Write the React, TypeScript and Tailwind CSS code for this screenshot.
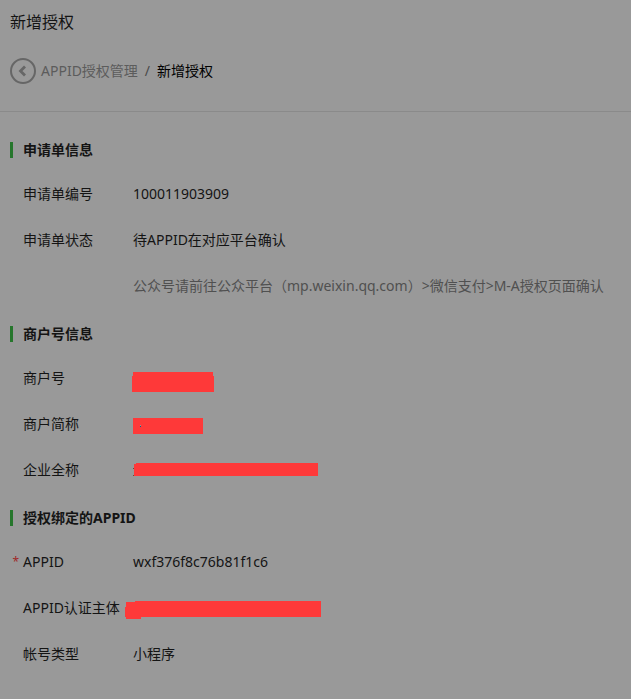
import type { ReactNode } from 'react';

function Redacted({ d, children }: { d: string; children?: ReactNode }) {
  return (
    <svg className="absolute top-0 left-0 overflow-visible" width="190" height="20" shapeRendering="crispEdges" aria-hidden="true">
      <path d={d} fill="#fe3939" />
      {children}
    </svg>
  );
}

function Section({ title, children }: { title: string; children: ReactNode }) {
  return (
    <section>
      <h2 className="flex items-center gap-[10px] text-sm leading-5 font-bold">
        <span className="w-[3px] h-4 bg-[#26762c]" />
        {title}
      </h2>
      <dl className="mt-6 pl-[13px] space-y-[26px]">{children}</dl>
    </section>
  );
}

function Field({ label, required, children }: { label: string; required?: boolean; children: ReactNode }) {
  return (
    <div className="flex text-sm leading-5">
      <dt className="relative w-[110px] shrink-0">
        {required && <span className="absolute right-full mr-1 text-xs leading-5 text-[#a02828]">*</span>}
        {label}
      </dt>
      <dd className="relative min-w-0 flex-1">{children}</dd>
    </div>
  );
}

export default function App() {
  return (
    <div className="min-h-screen bg-[#999999] text-[#141414] font-['Noto_Sans','Noto_Sans_CJK_SC',sans-serif]">
      <header className="px-[10px] pt-3 pb-[27px] border-b border-[#8a8a8a]">
        <h1 className="text-base leading-5">新增授权</h1>
        <nav className="mt-[26px] flex items-center text-sm leading-5">
          <a href="#" className="flex items-center gap-[5px] text-[#5c5c5c]">
            <svg width="26" height="26" viewBox="0 0 26 26" fill="none" stroke="#666666" aria-hidden="true">
              <circle cx="13" cy="13" r="12" strokeWidth="2" />
              <path d="M15 8.5 10.5 13l4.5 4.5" strokeWidth="2.8" />
            </svg>
            APPID授权管理
          </a>
          <span className="mx-[7px] text-[#4a4a4a]">/</span>
          <span className="text-black">新增授权</span>
        </nav>
      </header>

      <main className="px-[10px] pt-7 pb-9 space-y-7">
        <Section title="申请单信息">
          <Field label="申请单编号">100011903909</Field>
          <Field label="申请单状态">
            待APPID在对应平台确认
            <p className="mt-[26px] text-[#505050]">公众号请前往公众平台（mp.weixin.qq.com）&gt;微信支付&gt;M-A授权页面确认</p>
          </Field>
        </Section>

        <Section title="商户号信息">
          <Field label="商户号">
            <Redacted d="M0 4H80V8H81V24H-1V8H0Z" />
          </Field>
          <Field label="商户简称">
            <Redacted d="M0 4H70V20H0Z">
              <path d="M7 11h1v1h-1z" fill="#a09090" />
              <path d="M7 12h1v1h-1z" fill="#174f80" />
            </Redacted>
          </Field>
          <Field label="企业全称">
            <Redacted d="M3 3H185V16H1V4H3Z">
              <path d="M0 8h1v1h-1zM0 15h1v1h-1z" fill="#6b4a35" />
            </Redacted>
          </Field>
        </Section>

        <Section title="授权绑定的APPID">
          <Field label="APPID" required>wxf376f8c76b81f1c6</Field>
          <Field label="APPID认证主体">
            <Redacted d="M2 3H188V19H8V21H-7V19H-8V9H-7V4H2Z" />
          </Field>
          <Field label="帐号类型">小程序</Field>
        </Section>
      </main>
    </div>
  );
}
